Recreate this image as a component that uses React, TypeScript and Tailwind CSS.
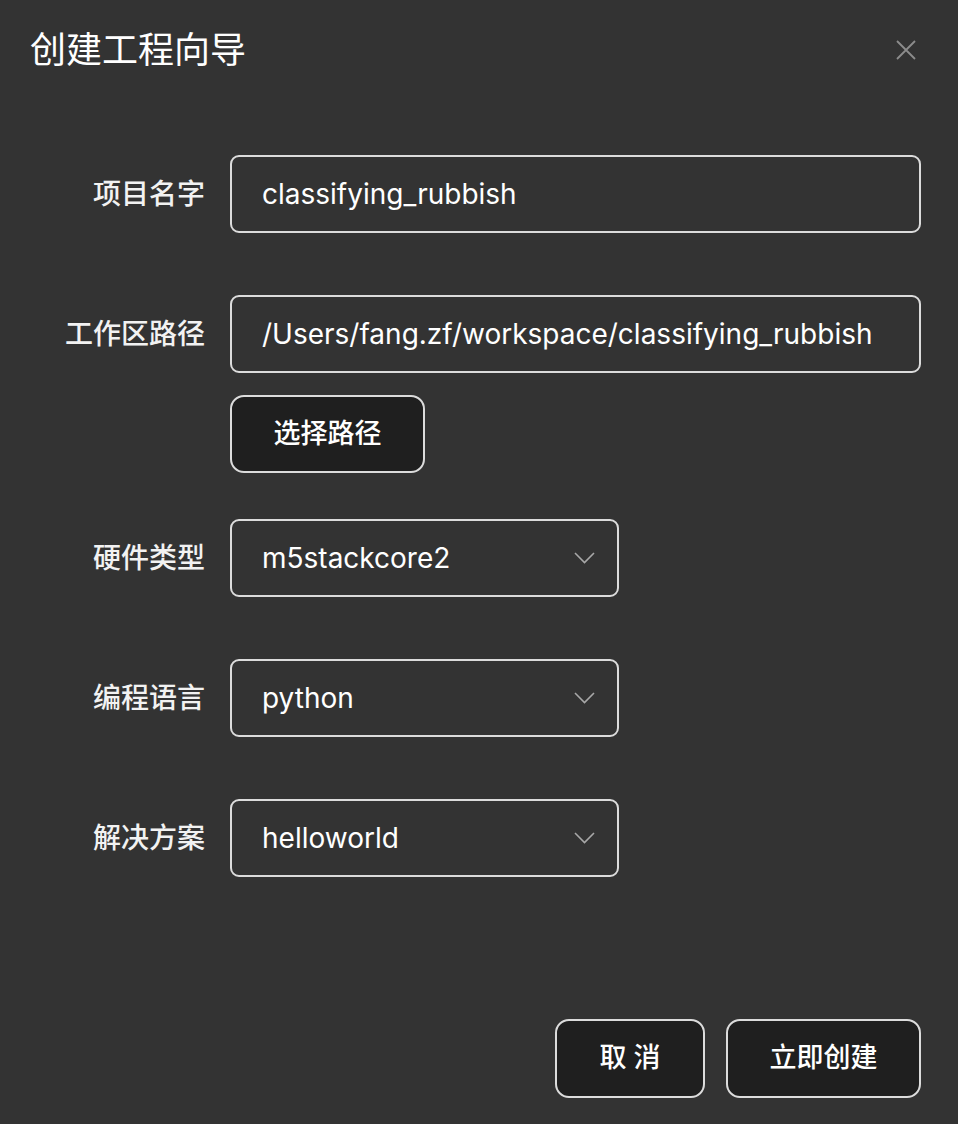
const font = { fontFamily: 'Inter, "Noto Sans CJK SC", sans-serif' };

function Chevron() {
  return (
    <svg width="21" height="12" viewBox="0 0 21 12" fill="none" className="shrink-0">
      <path d="M1 1l9.5 9.5L20 1" stroke="#a8a8a8" strokeWidth="1.6" />
    </svg>
  );
}

function CloseIcon() {
  return (
    <svg width="20" height="20" viewBox="0 0 20 20" fill="none">
      <path d="M1 1l18 18M19 1L1 19" stroke="#8c8c8c" strokeWidth="1.8" />
    </svg>
  );
}

function Label({ text }: { text: string }) {
  return (
    <div className="w-[205px] shrink-0 text-right text-[28px] font-medium text-[#f2f2f2]">{text}</div>
  );
}

function Field({ value }: { value: string }) {
  return (
    <div className="flex h-[78px] flex-1 items-center rounded-[9px] border-2 border-[#dcdcdc] pl-[30px] text-[28px] text-white">
      {value}
    </div>
  );
}

function Select({ value }: { value: string }) {
  return (
    <div className="flex h-[78px] w-[389px] items-center justify-between rounded-[9px] border-2 border-[#dcdcdc] pl-[30px] pr-[22px] text-[28px] text-white">
      <span>{value}</span>
      <Chevron />
    </div>
  );
}

function Row({ label, children, className }: { label: string; children: React.ReactNode; className?: string }) {
  return (
    <div className={`flex items-center gap-[25px] ${className ?? ''}`}>
      <Label text={label} />
      {children}
    </div>
  );
}

export default function App() {
  return (
    <div className="flex h-[1124px] w-[958px] flex-col bg-[#333333] pr-[37px]" style={font}>
      <div className="flex items-center justify-between pl-[30px] pt-[28px]">
        <h1 className="text-[36px] leading-[44px] text-white">创建工程向导</h1>
        <div className="mr-[5px]">
          <CloseIcon />
        </div>
      </div>

      <div className="mt-[83px] flex flex-col">
        <Row label="项目名字">
          <Field value="classifying_rubbish" />
        </Row>
        <Row label="工作区路径" className="mt-[62px]">
          <Field value="/Users/fang.zf/workspace/classifying_rubbish" />
        </Row>
        <div className="ml-[230px] mt-[22px]">
          <button className="flex h-[78px] w-[195px] items-center justify-center rounded-[14px] border-2 border-[#dcdcdc] bg-[#1f1f1f] text-[27px] font-medium text-white">
            选择路径
          </button>
        </div>
        <Row label="硬件类型" className="mt-[46px]">
          <Select value="m5stackcore2" />
        </Row>
        <Row label="编程语言" className="mt-[62px]">
          <Select value="python" />
        </Row>
        <Row label="解决方案" className="mt-[62px]">
          <Select value="helloworld" />
        </Row>
      </div>

      <div className="mt-auto mb-[26px] flex justify-end gap-[21px]">
        <button className="flex h-[79px] w-[150px] items-center justify-center rounded-[14px] border-2 border-[#dcdcdc] bg-[#1f1f1f] text-[27px] font-medium text-white">
          取 消
        </button>
        <button className="flex h-[79px] w-[195px] items-center justify-center rounded-[14px] border-2 border-[#dcdcdc] bg-[#1f1f1f] text-[27px] font-medium text-white">
          立即创建
        </button>
      </div>
    </div>
  );
}
